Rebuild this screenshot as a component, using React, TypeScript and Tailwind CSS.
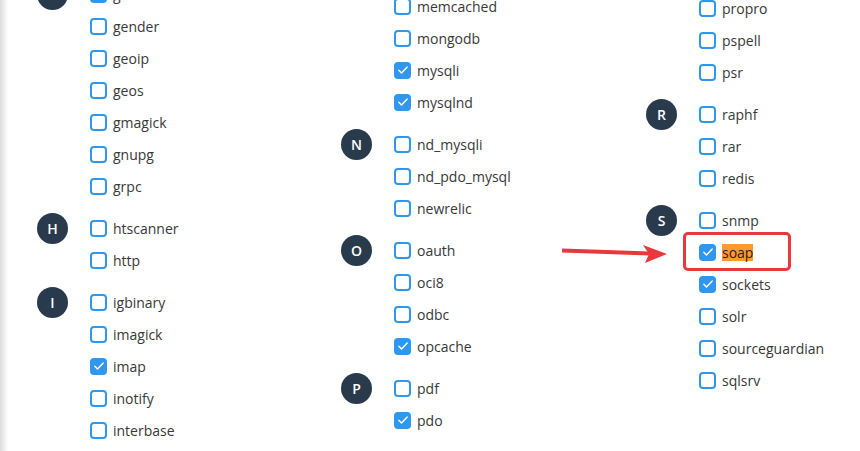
import React from "react";

type Item = { name: string; checked?: boolean; marked?: boolean };
type Group = { letter?: string; items: Item[] };

const columns: { offset: string; groups: Group[] }[] = [
  {
    offset: "mt-[-22px]",
    groups: [
      {
        letter: "G",
        items: [
          { name: "gd", checked: true },
          { name: "gender" },
          { name: "geoip" },
          { name: "geos" },
          { name: "gmagick" },
          { name: "gnupg" },
          { name: "grpc" },
        ],
      },
      { letter: "H", items: [{ name: "htscanner" }, { name: "http" }] },
      {
        letter: "I",
        items: [
          { name: "igbinary" },
          { name: "imagick" },
          { name: "imap", checked: true },
          { name: "inotify" },
          { name: "interbase" },
        ],
      },
    ],
  },
  {
    offset: "mt-[-74px]",
    groups: [
      {
        letter: "M",
        items: [
          { name: "mbstring", checked: true },
          { name: "memcache" },
          { name: "memcached" },
          { name: "mongodb" },
          { name: "mysqli", checked: true },
          { name: "mysqlnd", checked: true },
        ],
      },
      { letter: "N", items: [{ name: "nd_mysqli" }, { name: "nd_pdo_mysql" }, { name: "newrelic" }] },
      {
        letter: "O",
        items: [{ name: "oauth" }, { name: "oci8" }, { name: "odbc" }, { name: "opcache", checked: true }],
      },
      { letter: "P", items: [{ name: "pdf" }, { name: "pdo", checked: true }] },
    ],
  },
  {
    offset: "mt-[-8px]",
    groups: [
      { items: [{ name: "propro" }, { name: "pspell" }, { name: "psr" }] },
      { letter: "R", items: [{ name: "raphf" }, { name: "rar" }, { name: "redis" }] },
      {
        letter: "S",
        items: [
          { name: "snmp" },
          { name: "soap", checked: true, marked: true },
          { name: "sockets", checked: true },
          { name: "solr" },
          { name: "sourceguardian" },
          { name: "sqlsrv" },
        ],
      },
    ],
  },
];

const Checkbox = ({ checked }: { checked?: boolean }) =>
  checked ? (
    <span className="flex size-[17px] shrink-0 items-center justify-center rounded-[4px] bg-[#3097ee]">
      <svg viewBox="0 0 16 16" className="size-[14px]" fill="none" stroke="white" strokeWidth="1.6" strokeLinecap="round" strokeLinejoin="round">
        <path d="M3.2 8.4l3.1 3.1 6.5-7" />
      </svg>
    </span>
  ) : (
    <span className="size-[17px] shrink-0 rounded-[4px] border-2 border-[#3097ee] bg-white" />
  );

const Row = ({ item }: { item: Item }) => (
  <div className="relative flex h-8 items-center gap-[6px]">
    {item.marked && (
      <span className="absolute left-[-16px] top-[-4px] h-[39px] w-[108px] rounded-[5px] border-[3px] border-[#e8383d]" />
    )}
    <Checkbox checked={item.checked} />
    {item.marked ? (
      <span className="bg-[#ff9a2e] leading-[17px] text-[#222]">{item.name}</span>
    ) : (
      <span>{item.name}</span>
    )}
  </div>
);

export default function App() {
  return (
    <div className="relative flex h-[451px] w-[860px] overflow-hidden bg-white font-['Open_Sans',sans-serif] text-[14px] text-[#383838]">
      <div className="w-[8px] shrink-0 bg-gradient-to-r from-[#dcdcdc] to-white" />
      <div className="grid flex-1 grid-cols-[304px_305px_1fr] pl-[29px]">
        {columns.map((col, ci) => (
          <div key={ci} className={`flex flex-col gap-[10px] ${col.offset}`}>
            {col.groups.map((g, gi) => (
              <div key={gi} className="flex">
                <div className="w-[31px] shrink-0 pt-[0.5px]">
                  {g.letter && (
                    <div className="flex size-[31px] items-center justify-center rounded-full bg-[#293a4d] text-[14px] font-semibold text-white">
                      {g.letter}
                    </div>
                  )}
                </div>
                <div className="ml-[22px] flex flex-col">
                  {g.items.map((it) => (
                    <Row key={it.name} item={it} />
                  ))}
                </div>
              </div>
            ))}
          </div>
        ))}
      </div>

      <svg className="pointer-events-none absolute left-0 top-0" width="860" height="451">
        <line x1="562" y1="250.5" x2="650" y2="253.5" stroke="#e8383d" strokeWidth="4" />
        <polygon points="643,245 667,254 645,263 649,254" fill="#e8383d" />
      </svg>
    </div>
  );
}
